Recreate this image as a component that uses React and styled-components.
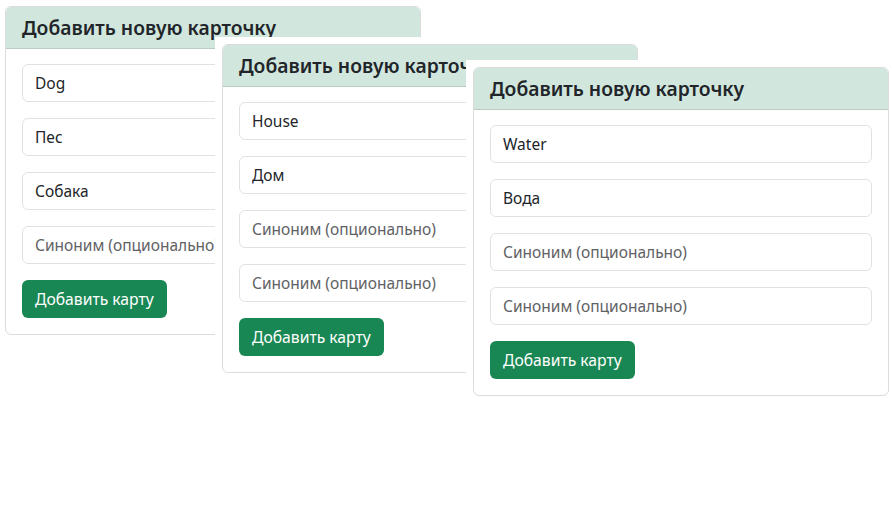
import React from "react";
import styled, { createGlobalStyle } from "styled-components";

const GlobalStyle = createGlobalStyle`
  html, body {
    margin: 0;
    padding: 0;
    background: #fff;
  }
  body {
    font-family: "Noto Sans", "DejaVu Sans", sans-serif;
    color: #212529;
  }
  * {
    box-sizing: border-box;
  }
`;

const Desk = styled.div`
  position: relative;
  width: 892px;
  height: 520px;
  overflow: hidden;
`;

// each card sits in a white frame that covers the cards below it
const Frame = styled.div`
  position: absolute;
  left: ${props => props.x - 7}px;
  top: ${props => props.y - 7}px;
  padding: 7px;
  background: #fff;
`;

const Card = styled.div`
  width: 416px;
  border: 1px solid #dcdcdc;
  border-radius: 6px;
  background: #fff;
  overflow: hidden;
`;

const CardHeader = styled.div`
  background: #d1e7dd;
  border-bottom: 1px solid #b9cbc3;
  padding: 8px 16px;
`;

const Title = styled.h5`
  margin: 0;
  font-size: 19.3px;
  font-weight: 600;
  line-height: 25px;
  color: #212529;
`;

const CardBody = styled.form`
  display: flex;
  flex-direction: column;
  align-items: flex-start;
  gap: 16px;
  padding: 15px 16px 16px;
`;

const Field = styled.input`
  width: 100%;
  height: 38px;
  padding: 6px 12px;
  border: 1px solid #dee2e6;
  border-radius: 6px;
  font-family: inherit;
  font-size: 15.5px;
  color: #212529;
  background: #fff;
  outline: none;

  &::placeholder {
    color: #5f6265;
  }
`;

const AddButton = styled.button`
  height: 38px;
  padding: 0 13px;
  border: none;
  border-radius: 6px;
  background: #198754;
  color: #fff;
  font-family: inherit;
  font-size: 15.7px;
  cursor: pointer;
`;

const cards = [
  { x: 5, y: 6, values: ["Dog", "Пес", "Собака", ""] },
  { x: 222, y: 44, values: ["House", "Дом", "", ""] },
  { x: 473, y: 67, values: ["Water", "Вода", "", ""] },
];

function NewCardForm({ x, y, values }) {
  return (
    <Frame x={x} y={y}>
      <Card>
        <CardHeader>
          <Title>Добавить новую карточку</Title>
        </CardHeader>
        <CardBody onSubmit={e => e.preventDefault()}>
          {values.map((v, i) => (
            <Field key={i} defaultValue={v} placeholder="Синоним (опционально)" />
          ))}
          <AddButton type="submit">Добавить карту</AddButton>
        </CardBody>
      </Card>
    </Frame>
  );
}

export default function App() {
  return (
    <>
      <GlobalStyle />
      <Desk>
        {cards.map((c, i) => (
          <NewCardForm key={i} {...c} />
        ))}
      </Desk>
    </>
  );
}
